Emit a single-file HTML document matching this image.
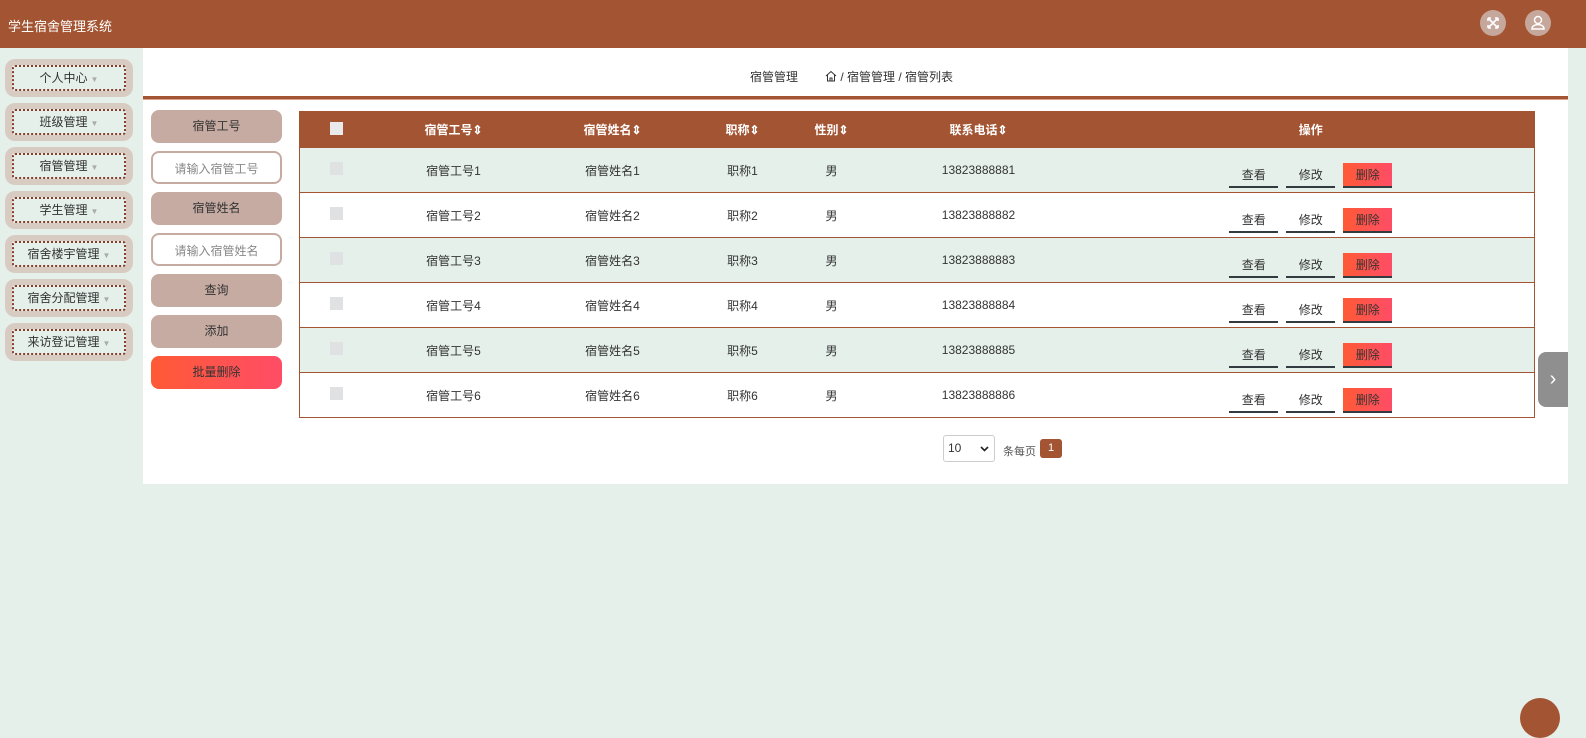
<!DOCTYPE html>
<html><head><meta charset="utf-8"><style>
*{margin:0;padding:0;box-sizing:border-box}
html,body{width:1586px;height:719px}
body{background:#e5f0eb;font-family:"Liberation Sans","Noto Sans CJK SC",sans-serif;position:relative;overflow:hidden;font-size:12px;color:#333}
.hdr{position:absolute;left:0;top:0;width:1586px;height:48px;background:#a35432}
.hdr .t{position:absolute;left:8px;top:16px;color:#fff;font-size:13px}
.ic{position:absolute;top:10px;width:26px;height:26px;border-radius:50%;background:#c6a79c}
.side .it{position:absolute;left:5px;width:128px;height:38px;background:#d8cbc2;border-radius:10px}
.side .it div{position:absolute;left:7px;top:6px;width:114px;height:26px;border:2px dotted #8a3d2a;border-radius:3px;text-align:center;line-height:22px;font-size:12px;color:#333;background:#e5f0eb}
.side .it span{color:#aaa;font-size:8px;margin-left:3px}
.main{position:absolute;left:143px;top:48px;width:1425px;height:436px;background:#fff}
.bc{position:absolute;top:68px;font-size:12px;color:#333}
.line{position:absolute;left:143px;top:96px;width:1425px;height:4px;background:#a35432;border-bottom:1px solid #d9a38a}
.fb{position:absolute;left:151px;width:131px;height:33px;border-radius:8px;text-align:center;line-height:33px;font-size:12px;background:#c6aba2;color:#333}
.fi{background:#fff;border:2px solid #c6aba2;color:#888}
table{position:absolute;left:299px;top:111px;width:1236px;border-collapse:collapse;border:1px solid #a35432}
th{background:#a35432;color:#fff;height:36px;font-weight:bold;font-size:12px}
td{height:45px;text-align:center;border-top:1px solid #a35432;font-size:12px;color:#333}
tr.a td{background:#e5f0eb}
.cb{display:inline-block;width:13px;height:13px;background:#dfe1e2}
th .cb{background:#e8eaec}
.b{display:inline-block;width:49px;height:25px;line-height:24px;margin:10px 4px 0;border-bottom:2px solid #333a40;font-size:12px}
.d{background:linear-gradient(90deg,#ff5a36,#ff4d66);color:#333}
</style></head><body>
<div class="hdr"><div class="t">学生宿舍管理系统</div>
<div class="ic" style="left:1480px"><svg width="26" height="26" viewBox="0 0 26 26" fill="none" stroke="#fff" stroke-width="1.6"><path d="M8 8l10 10M18 8L8 18M8 8h3M8 8v3M18 8h-3M18 8v3M8 18h3M8 18v-3M18 18h-3M18 18v-3"/></svg></div>
<div class="ic" style="left:1525px"><svg width="26" height="26" viewBox="0 0 26 26" fill="none" stroke="#fff" stroke-width="1.5"><circle cx="13" cy="10" r="3.5"/><path d="M7 19c0-3 3-4.5 6-4.5s6 1.5 6 4.5z"/></svg></div>
</div>
<div class="side">
<div class="it" style="top:59px"><div>个人中心<span>▼</span></div></div>
<div class="it" style="top:103px"><div>班级管理<span>▼</span></div></div>
<div class="it" style="top:147px"><div>宿管管理<span>▼</span></div></div>
<div class="it" style="top:191px"><div>学生管理<span>▼</span></div></div>
<div class="it" style="top:235px"><div>宿舍楼宇管理<span>▼</span></div></div>
<div class="it" style="top:279px"><div>宿舍分配管理<span>▼</span></div></div>
<div class="it" style="top:323px"><div>来访登记管理<span>▼</span></div></div>
</div>
<div class="main"></div>
<div class="bc" style="left:750px">宿管管理</div>
<div class="bc" style="left:825px"><svg width="12" height="12" viewBox="0 0 12 12" fill="none" stroke="#333" stroke-width="1" style="vertical-align:-1px"><path d="M1 6L6 1.5 11 6M2.5 5v6h7V5M5 11V8h2v3"/></svg> / 宿管管理 / 宿管列表</div>
<div class="line"></div>
<div class="fb" style="top:110px">宿管工号</div>
<div class="fb fi" style="top:151px">请输入宿管工号</div>
<div class="fb" style="top:192px">宿管姓名</div>
<div class="fb fi" style="top:233px">请输入宿管姓名</div>
<div class="fb" style="top:274px">查询</div>
<div class="fb" style="top:315px">添加</div>
<div class="fb" style="top:356px;background:linear-gradient(90deg,#ff5a36,#ff4d66)">批量删除</div>
<table>
<tr><th style="width:74px"><span class="cb"></span></th><th style="width:160px">宿管工号⇕</th><th style="width:158px">宿管姓名⇕</th><th style="width:102px">职称⇕</th><th style="width:76px">性别⇕</th><th style="width:218px">联系电话⇕</th><th>操作</th></tr>
<tr class="a"><td><span class="cb"></span></td><td>宿管工号1</td><td>宿管姓名1</td><td>职称1</td><td>男</td><td>13823888881</td><td><span class="b">查看</span><span class="b">修改</span><span class="b d">删除</span></td></tr>
<tr><td><span class="cb"></span></td><td>宿管工号2</td><td>宿管姓名2</td><td>职称2</td><td>男</td><td>13823888882</td><td><span class="b">查看</span><span class="b">修改</span><span class="b d">删除</span></td></tr>
<tr class="a"><td><span class="cb"></span></td><td>宿管工号3</td><td>宿管姓名3</td><td>职称3</td><td>男</td><td>13823888883</td><td><span class="b">查看</span><span class="b">修改</span><span class="b d">删除</span></td></tr>
<tr><td><span class="cb"></span></td><td>宿管工号4</td><td>宿管姓名4</td><td>职称4</td><td>男</td><td>13823888884</td><td><span class="b">查看</span><span class="b">修改</span><span class="b d">删除</span></td></tr>
<tr class="a"><td><span class="cb"></span></td><td>宿管工号5</td><td>宿管姓名5</td><td>职称5</td><td>男</td><td>13823888885</td><td><span class="b">查看</span><span class="b">修改</span><span class="b d">删除</span></td></tr>
<tr><td><span class="cb"></span></td><td>宿管工号6</td><td>宿管姓名6</td><td>职称6</td><td>男</td><td>13823888886</td><td><span class="b">查看</span><span class="b">修改</span><span class="b d">删除</span></td></tr>
</table>
<div style="position:absolute;left:943px;top:435px;width:52px;height:27px;border:1px solid #ccc;border-radius:3px;background:#fff;font-size:12px;line-height:25px;padding-left:4px">10<svg style="position:absolute;right:5px;top:10px" width="9" height="6" viewBox="0 0 9 6" fill="none" stroke="#222" stroke-width="1.6"><path d="M1 1l3.5 3.5L8 1"/></svg></div>
<div style="position:absolute;left:1003px;top:443px;font-size:11px;color:#555">条每页</div>
<div style="position:absolute;left:1040px;top:439px;width:22px;height:19px;background:#a35432;color:#fff;border-radius:3px;text-align:center;line-height:19px;font-size:11px">1</div>
<div style="position:absolute;left:1538px;top:352px;width:30px;height:55px;background:#8f8f8f;border-radius:8px 0 0 8px;color:#fff;font-size:20px;line-height:55px;text-align:center">›</div>
<div style="position:absolute;left:1520px;top:698px;width:40px;height:40px;border-radius:50%;background:#a35432"></div>
</body></html>
